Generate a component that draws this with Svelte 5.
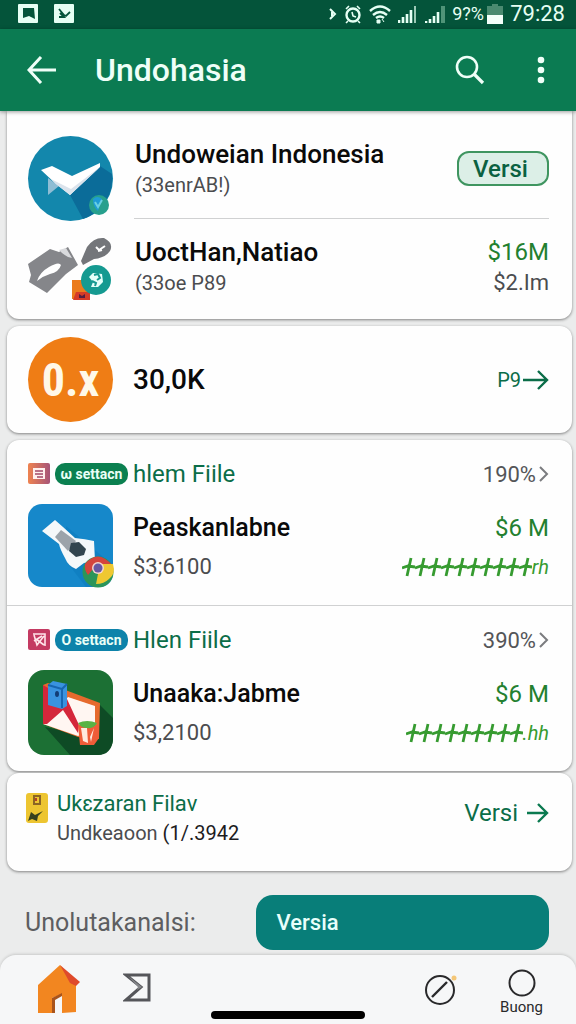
<script lang="ts">
  interface Item {
    id: string;
    tag: string;
    kind: string;
    heading: string;
    percent: string;
    name: string;
    price: string;
    amount: string;
    tail: string;
    ticks: number;
  }

  const items: Item[] = [
    { id: 'pen', tag: 'ω settacn', kind: 'green', heading: 'hlem Fiile', percent: '190%', name: 'Peaskanlabne', price: '$3;6100', amount: '$6 M', tail: 'rh', ticks: 10 },
    { id: 'game', tag: 'O settacn', kind: 'blue', heading: 'Hlen Fiile', percent: '390%', name: 'Unaaka:Jabme', price: '$3,2100', amount: '$6 M', tail: '.hh', ticks: 9 },
  ];
</script>

<div class="screen">
  <div class="status">
    <div class="status-side notes">
      <svg width="20" height="19" viewBox="0 0 20 19"><rect width="20" height="19" rx="1" fill="#e6fff4" /><path d="M5 4h11l1 11-6-3-6 2z" fill="#04543a" /></svg>
      <svg width="20" height="19" viewBox="0 0 20 19"><rect width="20" height="19" rx="1" fill="#e6fff4" /><path d="M5 5l5 6 2 1 4-4M5 13h5l-4-4" fill="none" stroke="#04543a" stroke-width="1.8" /></svg>
    </div>
    <div class="status-side">
      <svg width="8" height="16" viewBox="0 0 8 16"><path d="M1 3l5 5-5 5M3 6v4" fill="none" stroke="#e6fff4" stroke-width="2" /></svg>
      <svg width="18" height="20" viewBox="0 0 18 20"><circle cx="9" cy="11" r="6.5" fill="none" stroke="#e6fff4" stroke-width="2.4" /><path d="M2 5l3-3M16 5l-3-3M8 8l1 4 3 1M4 17l-2 2M14 17l2 2" fill="none" stroke="#e6fff4" stroke-width="1.6" /></svg>
      <svg width="22" height="20" viewBox="0 0 22 20"><path d="M1 7q10-9 20 0M4 11q7-6 14 0M7 14q4-3 8 0" fill="none" stroke="#e6fff4" stroke-width="2.4" /><path d="M8 16h3v3H8zM13 15l2 3" fill="#e6fff4" stroke="#e6fff4" /></svg>
      <svg width="18" height="20" viewBox="0 0 18 20"><path d="M1 19v-3M5 19v-6M9 19v-9M13 19V6" stroke="#e6fff4" stroke-width="2.6" /><path d="M17 19V2" stroke="#9cc9b6" stroke-width="2" /></svg>
      <svg class="spaced" width="20" height="20" viewBox="0 0 20 20"><path d="M1 19v-2M5 19v-4M9 19v-7M13 19V8" stroke="#e6fff4" stroke-width="2.6" /><path d="M18 19V2" stroke="#4f9478" stroke-width="4" /></svg>
      <span class="battery">9?%</span>
      <svg width="16" height="20" viewBox="0 0 16 20"><path d="M5 0h6v2h5v9H0V2h5z" fill="#4a8a70" /><path d="M0 11h16v9H0z" fill="#f3fffa" /></svg>
      <span class="clock">79:28</span>
    </div>
  </div>

  <header>
    <button class="icon-btn" aria-label="Back">
      <svg width="30" height="28" viewBox="0 0 30 28"><path d="M14 1L2 14l12 13M2 14h27" fill="none" stroke="#effff8" stroke-width="3" /></svg>
    </button>
    <h1>Undohasia</h1>
    <button class="icon-btn" aria-label="Search">
      <svg width="30" height="30" viewBox="0 0 30 30"><circle cx="12" cy="12" r="10" fill="none" stroke="#effff8" stroke-width="2.6" /><path d="M19 19l9 9" stroke="#effff8" stroke-width="3.2" /></svg>
    </button>
    <button class="icon-btn more" aria-label="More">
      <svg width="8" height="28" viewBox="0 0 8 28" fill="#effff8"><circle cx="4" cy="4" r="3.3" /><circle cx="4" cy="14" r="3.3" /><circle cx="4" cy="24" r="3.3" /></svg>
    </button>
  </header>

  <main>
    <section class="card apps">
      <div class="row">
        <svg class="thumb" viewBox="0 0 85 85">
          <circle cx="42.5" cy="42.5" r="42.5" fill="#1387ac" />
          <path d="M72 30l12 8a42.5 42.5 0 0 1-29 45L42 59z" fill="#0b6c99" />
          <path d="M20 42v17l11-9z" fill="#8fbdd4" />
          <path d="M13 34l11-4 20 10 28-13v4L42 59 28 48z" fill="#fff" />
          <path d="M28 48l-5-5 20 10 29-22-30 28z" fill="#dbe3ec" />
          <circle cx="71" cy="69" r="10" fill="#27a08d" />
          <path d="M65 63q4-4 9 0l-4 12q-5-4-5-12z" fill="#1e9bd7" /><path d="M67 66l3 5 4-7" fill="none" stroke="#69d0e2" stroke-width="2" />
        </svg>
        <div class="text">
          <h2>Undoweian Indonesia</h2>
          <p>(33enrAB!)</p>
        </div>
        <button class="pill">Versi</button>
      </div>
      <hr />
      <div class="row">
        <svg class="thumb short" viewBox="0 0 85 68">
          <path d="M0 30l22-15 9 3 9-5 10 18-12 9-19 19-18-11 2-7z" fill="#85868a" />
          <path d="M9 47q3-9 12-14 10-6 12-2-2 7-11 9-7 2-13 7z" fill="#fff" />
          <path d="M31 16l7-2 6 10q-7-1-13-8z" fill="#d9dadd" />
          <path d="M53 27l6-14Q66 3 76 4q10 5 6 13-5 7-16 8l-11 6z" fill="#74767a" />
          <path d="M68 13l3 3 6-4M70 17l4-1" stroke="#fff" stroke-width="2" fill="none" />
          <path d="M44 46h17v19H44z" fill="#eb7b1c" /><path d="M48 58h14v8H45z" fill="#d63b27" /><path d="M51 60l3 2 3-2v4h-6z" fill="#571e41" />
          <circle cx="68" cy="46" r="15" fill="#159a91" />
          <path d="M61 43l4-4 9 1 1 8-5 5h-7l2-5z" fill="#e6fffa" /><path d="M66 41l4-1 2 4-3 2M64 47l4 2-1 3" fill="none" stroke="#159a91" stroke-width="2" />
        </svg>
        <div class="text">
          <h2>UoctHan,Natiao</h2>
          <p>(33oe P89</p>
        </div>
        <div class="figures">
          <span class="money">$16M</span>
          <span class="minor">$2.Im</span>
        </div>
      </div>
    </section>

    <section class="card rate">
      <div class="disc">0.x</div>
      <h2>30,0K</h2>
      <a class="go" href="#rate">P9<svg width="26" height="22" viewBox="0 0 26 22"><path d="M0 11h24M15 2l9 9-9 9" fill="none" stroke="#0b6d48" stroke-width="2.4" /></svg></a>
    </section>

    <section class="card files">
      {#each items as item (item.id)}
        <article>
          <div class="file-head">
            {#if item.id === 'pen'}
              <svg width="22" height="22" viewBox="0 0 22 22">
                <defs><linearGradient id="warm"><stop stop-color="#ef8350" /><stop offset="1" stop-color="#a65478" /></linearGradient></defs>
                <rect width="22" height="21" rx="2" fill="url(#warm)" /><path d="M5 5h12v11H5z" fill="#fff0ee" /><path d="M7 8h8M7 11h8M9 14h6" stroke="#a34868" stroke-width="1.4" />
              </svg>
            {:else}
              <svg width="22" height="22" viewBox="0 0 22 22"><rect width="22" height="21" rx="2" fill="#c43a62" /><path d="M5 5h12v12M6 6l3 10 7-9M8 10l8 6M6 12l8-5" fill="none" stroke="#ffe4ea" stroke-width="1.6" /></svg>
            {/if}
            <span class="chip {item.kind}">{item.tag}</span>
            <h3>{item.heading}</h3>
            <a class="percent" href="#{item.id}">{item.percent}<svg width="10" height="18" viewBox="0 0 10 18"><path d="M1 2l7 7-7 7" fill="none" stroke="#7b7c7f" stroke-width="2" /></svg></a>
          </div>
          <div class="row">
            {#if item.id === 'pen'}
              <svg class="thumb" viewBox="0 0 85 85">
                <rect width="85" height="83" rx="14" fill="#1688ca" />
                <path d="M38 22l47 39v10q-2 12-14 12H58L38 57z" fill="#0876b6" opacity=".4" />
                <path d="M14 27l13-11 8 7 12 11q10 1 19 3l1 20-11 2-8 6q-8-3-11-11-5-9-6-14z" fill="#f4f8fa" />
                <path d="M27 33l6-7 15 11-8 10z" fill="#9ba3aa" />
                <path d="M43 39l8-1 7 7-2 6-8 2-7-6z" fill="#32454f" />
                <circle cx="70" cy="68" r="15.5" fill="#2c9559" /><path d="M57 60Q70 44 85 62l-15 4-5-1-5 6q-4-5-3-11z" fill="#d4443d" /><path d="M72 60h13q3 10-4 15-5 5-13 5z" fill="#efc831" /><circle cx="70" cy="64" r="6" fill="#f5d5ce" /><circle cx="70" cy="64" r="4.5" fill="#6857a2" />
              </svg>
            {:else}
              <svg class="thumb" viewBox="0 0 85 85">
                <rect width="85" height="85" rx="16" fill="#1c7034" />
                <path d="M72 35l13 13v22q-2 15-15 15H42L17 57l40 8z" fill="#0e4b25" />
                <path d="M15 15l5-2 20 8 32 12-1 36-21-2-35-13z" fill="#e66a2d" />
                <path d="M40 27l27 9v22L50 66 15 54l16-16z" fill="#fff6f2" />
                <path d="M15 15l24 14 12 26-1 8-15-23-16 14h-4z" fill="#d4273b" />
                <path d="M20 15l5-4 14 3v22l-5 3-14-4z" fill="#3993e0" /><path d="M20 15l14 4v19M34 19l5-5" fill="none" stroke="#1766b1" stroke-width="2" /><ellipse cx="29" cy="24" rx="2" ry="3" fill="#123d76" />
                <path d="M50 55h21v13l-5 7H52z" fill="#ef5c38" /><path d="M53 58h6l1 15-5-2zM66 58l-4 9 1 5z" fill="#ffe9de" /><path d="M50 53q9-4 19 0-3 6-10 5-6 0-9-5z" fill="#58b344" />
              </svg>
            {/if}
            <div class="text">
              <h2>{item.name}</h2>
              <p>{item.price}</p>
            </div>
            <div class="figures">
              <span class="money">{item.amount}</span>
              <span class="trend">
                <svg width={item.ticks * 13} height="20" viewBox="0 0 {item.ticks * 13} 20">
                  {#each Array(item.ticks) as _, i (i)}
                    <path d="M{i * 13} 11l6-2 7 1M{i * 13 + 9} 1L{i * 13 + 5} 19" fill="none" stroke="#369b30" stroke-width="2.8" />
                  {/each}
                </svg>{item.tail}
              </span>
            </div>
          </div>
        </article>
      {/each}
    </section>

    <section class="card last">
      <svg width="22" height="30" viewBox="0 0 22 30"><rect width="22" height="30" rx="3" fill="#edc531" /><path d="M8 3h6v8H8z" fill="none" stroke="#8b6524" stroke-width="2" /><path d="M10 5v3" stroke="#b53e2b" stroke-width="2" /><path d="M2 28l3-9 4 3 8-4-5 5-1 5-5-2z" fill="#37401e" /></svg>
      <div class="text">
        <h3>Ukɛzaran Filav</h3>
        <p>Undkeaoon <b>(1/.3942</b></p>
      </div>
      <a class="go" href="#versi">Versi<svg width="22" height="22" viewBox="0 0 22 22"><path d="M0 11h20M11 2l9 9-9 9" fill="none" stroke="#0b7a50" stroke-width="2.4" /></svg></a>
    </section>

    <div class="action">
      <span>Unolutakanalsi:</span>
      <button>Versia</button>
    </div>
  </main>

  <nav>
    <a href="#home" aria-label="Home">
      <svg width="42" height="49" viewBox="0 0 42 49"><path d="M0 20L22 0l16 19v28l-14 1V29l-10 4v15H0z" fill="#f28620" /><path d="M22 0l20 17-4 4-6-3z" fill="#df4a2b" /><path d="M14 33l10-5v3l-7 4v13h-3z" fill="#a9541c" /></svg>
    </a>
    <a href="#stats" aria-label="Stats">
      <svg width="29" height="29" viewBox="0 0 29 29"><path d="M3 2h23v25H3l15-13z" fill="none" stroke="#55565a" stroke-width="3" /><path d="M5 3l14 11-5 3 1-3z" fill="#85868a" /></svg>
    </a>
    <a class="right" href="#explore" aria-label="Explore">
      <svg width="32" height="32" viewBox="0 0 32 32"><circle cx="15" cy="17" r="14" fill="none" stroke="#29292b" stroke-width="2" /><path d="M7 24L22 9" stroke="#29292b" stroke-width="2.4" /><circle cx="29" cy="5" r="2.5" fill="#f4c778" /></svg>
    </a>
    <a class="account" href="#account">
      <svg width="28" height="28" viewBox="0 0 28 28"><circle cx="14" cy="14" r="12.5" fill="none" stroke="#29292b" stroke-width="2" /></svg>
      Buong
    </a>
    <div class="handle"></div>
  </nav>
</div>

<style>
  :global(body) { background: #ebecec; }
  .screen {
    min-height: 100vh;
    display: flex;
    flex-direction: column;
    font-family: Roboto, "Liberation Sans", sans-serif;
    color: #0a0a0a;
  }
  .screen * { box-sizing: border-box; }
  svg { display: block; flex-shrink: 0; }
  h1, h2, h3, p { margin: 0; font-weight: 500; white-space: nowrap; }
  a { color: inherit; text-decoration: none; }
  button { font-family: inherit; cursor: pointer; }

  .status {
    display: flex;
    justify-content: space-between;
    align-items: center;
    height: 29px;
    padding: 0 11px 2px 18px;
    background: #04543a;
    color: #e6fff4;
  }
  .status-side { display: flex; align-items: center; gap: 7px; }
  .notes { gap: 16px; }
  .spaced { margin-left: 2px; }
  .battery { font-size: 18px; width: 28px; white-space: nowrap; }
  .clock { font-size: 22px; line-height: 24px; }

  header {
    display: flex;
    align-items: center;
    height: 82px;
    padding: 0 31px 0 27px;
    background: #0b7b52;
    color: #effff8;
    position: relative;
    z-index: 1;
    box-shadow: 0 1px 4px rgba(0, 0, 0, 0.4);
  }
  h1 { flex: 1; font-size: 32px; line-height: 40px; margin-left: 38px; }
  .icon-btn { padding: 0; border: 0; background: none; }
  .more { margin-left: 52px; }

  main { flex: 1; }
  .card {
    margin: 0 4px 7px 7px;
    background: #fefefe;
    border-radius: 12px;
    box-shadow: 0 1px 3px rgba(0, 0, 0, 0.45);
    padding: 0 23px 0 21px;
  }
  .apps {
    padding-top: 25px;
    padding-bottom: 17px;
    border-radius: 0 0 12px 12px;
  }
  .row { display: flex; align-items: flex-start; gap: 20px; }
  .apps .row { gap: 22px; }
  .thumb { width: 85px; height: 85px; overflow: visible; }
  .short { height: 68px; }
  .text { flex: 1; }
  h2 { font-size: 26px; line-height: 36px; }
  .text p { font-size: 20px; line-height: 26px; font-weight: 400; color: #4b4c4f; }
  .pill {
    height: 35px;
    width: 92px;
    margin-top: 15px;
    padding: 0 5px 0 0;
    border: 2px solid #3f9560;
    border-radius: 12px;
    background: #dcefe7;
    color: #0a6141;
    font-size: 24px;
    font-weight: 500;
    line-height: 28px;
  }
  hr {
    height: 1px;
    margin: -3px 0 15px 106px;
    border: 0;
    background: #d0d1d2;
  }
  .figures { display: flex; flex-direction: column; align-items: flex-end; }
  .money { font-size: 24px; line-height: 36px; color: #23802f; }
  .minor { font-size: 22px; line-height: 26px; color: #4b4c4f; }

  .rate {
    display: flex;
    align-items: center;
    gap: 20px;
    padding-top: 11px;
    padding-bottom: 11px;
  }
  .rate h2 { flex: 1; font-size: 28px; }
  .disc {
    display: flex;
    align-items: center;
    justify-content: center;
    width: 85px;
    height: 85px;
    border-radius: 50%;
    background: #ef7d15;
    color: #fff8e8;
    font-family: "Roboto Condensed", Roboto, sans-serif;
    font-size: 46px;
    font-weight: 700;
  }
  .go {
    display: flex;
    align-items: center;
    gap: 2px;
    font-size: 20px;
    line-height: 28px;
    color: #0b6d48;
  }

  .files { padding: 0; margin-bottom: 2px; }
  article { padding: 17px 23px 16px 21px; }
  article + article { border-top: 1px solid #d0d1d2; }
  .file-head { display: flex; align-items: center; gap: 5px; height: 34px; margin-bottom: 13px; }
  .chip {
    width: 73px;
    height: 22px;
    border-radius: 10px;
    color: #eafff6;
    font-size: 14px;
    font-weight: 700;
    line-height: 22px;
    text-align: center;
  }
  .green { background: #0b8050; }
  .blue { background: #0d83aa; }
  h3 { font-size: 24px; line-height: 34px; font-weight: 400; color: #0b6d48; }
  .file-head h3 { flex: 1; }
  .percent { display: flex; align-items: center; gap: 3px; font-size: 22px; color: #545558; }
  article .row { height: 85px; }
  article .text, article .figures { padding-top: 6px; }
  article h2 { font-size: 25px; }
  article .text p { font-size: 22px; line-height: 42px; }
  .trend {
    display: flex;
    align-items: center;
    color: #369b30;
    font-size: 20px;
    font-style: italic;
    line-height: 42px;
  }

  .last {
    display: flex;
    align-items: flex-start;
    gap: 9px;
    min-height: 98px;
    padding: 16px 23px 22px 19px;
  }
  .last svg { margin-top: 4px; }
  .last h3 { font-size: 22px; line-height: 30px; }
  .last .text p { font-size: 20px; line-height: 28px; }
  .last b { font-weight: 400; color: #1c1c1e; }
  .last .go { gap: 9px; font-size: 24px; line-height: 48px; }
  .last .go svg { margin: 0; }

  .action {
    display: flex;
    align-items: center;
    gap: 20px;
    padding: 17px 27px 5px 25px;
    color: #5d5e61;
    font-size: 25px;
  }
  .action span { flex: 2; white-space: nowrap; }
  .action button {
    flex: 0 0 56%;
    height: 55px;
    padding: 0 21px;
    border: 0;
    border-radius: 17px;
    background: #087e79;
    color: #e8fffb;
    font-size: 22px;
    font-weight: 500;
    text-align: left;
  }

  nav {
    position: relative;
    display: flex;
    align-items: flex-start;
    min-height: 69px;
    padding: 10px 33px 5px 38px;
    background: #f6f7f8;
    border-radius: 16px 16px 0 0;
    box-shadow: 0 -1px 3px rgba(0, 0, 0, 0.15);
  }
  nav a + a { margin: 8px 0 0 43px; }
  nav .right { margin-left: auto; }
  nav a + .account {
    display: flex;
    flex-direction: column;
    align-items: center;
    margin-top: 4px;
    color: #29292b;
    font-size: 15px;
    line-height: 20px;
  }
  .handle {
    position: absolute;
    left: 50%;
    bottom: 5px;
    width: 154px;
    height: 8px;
    margin-left: -77px;
    border-radius: 4px;
    background: #000;
  }
</style>
